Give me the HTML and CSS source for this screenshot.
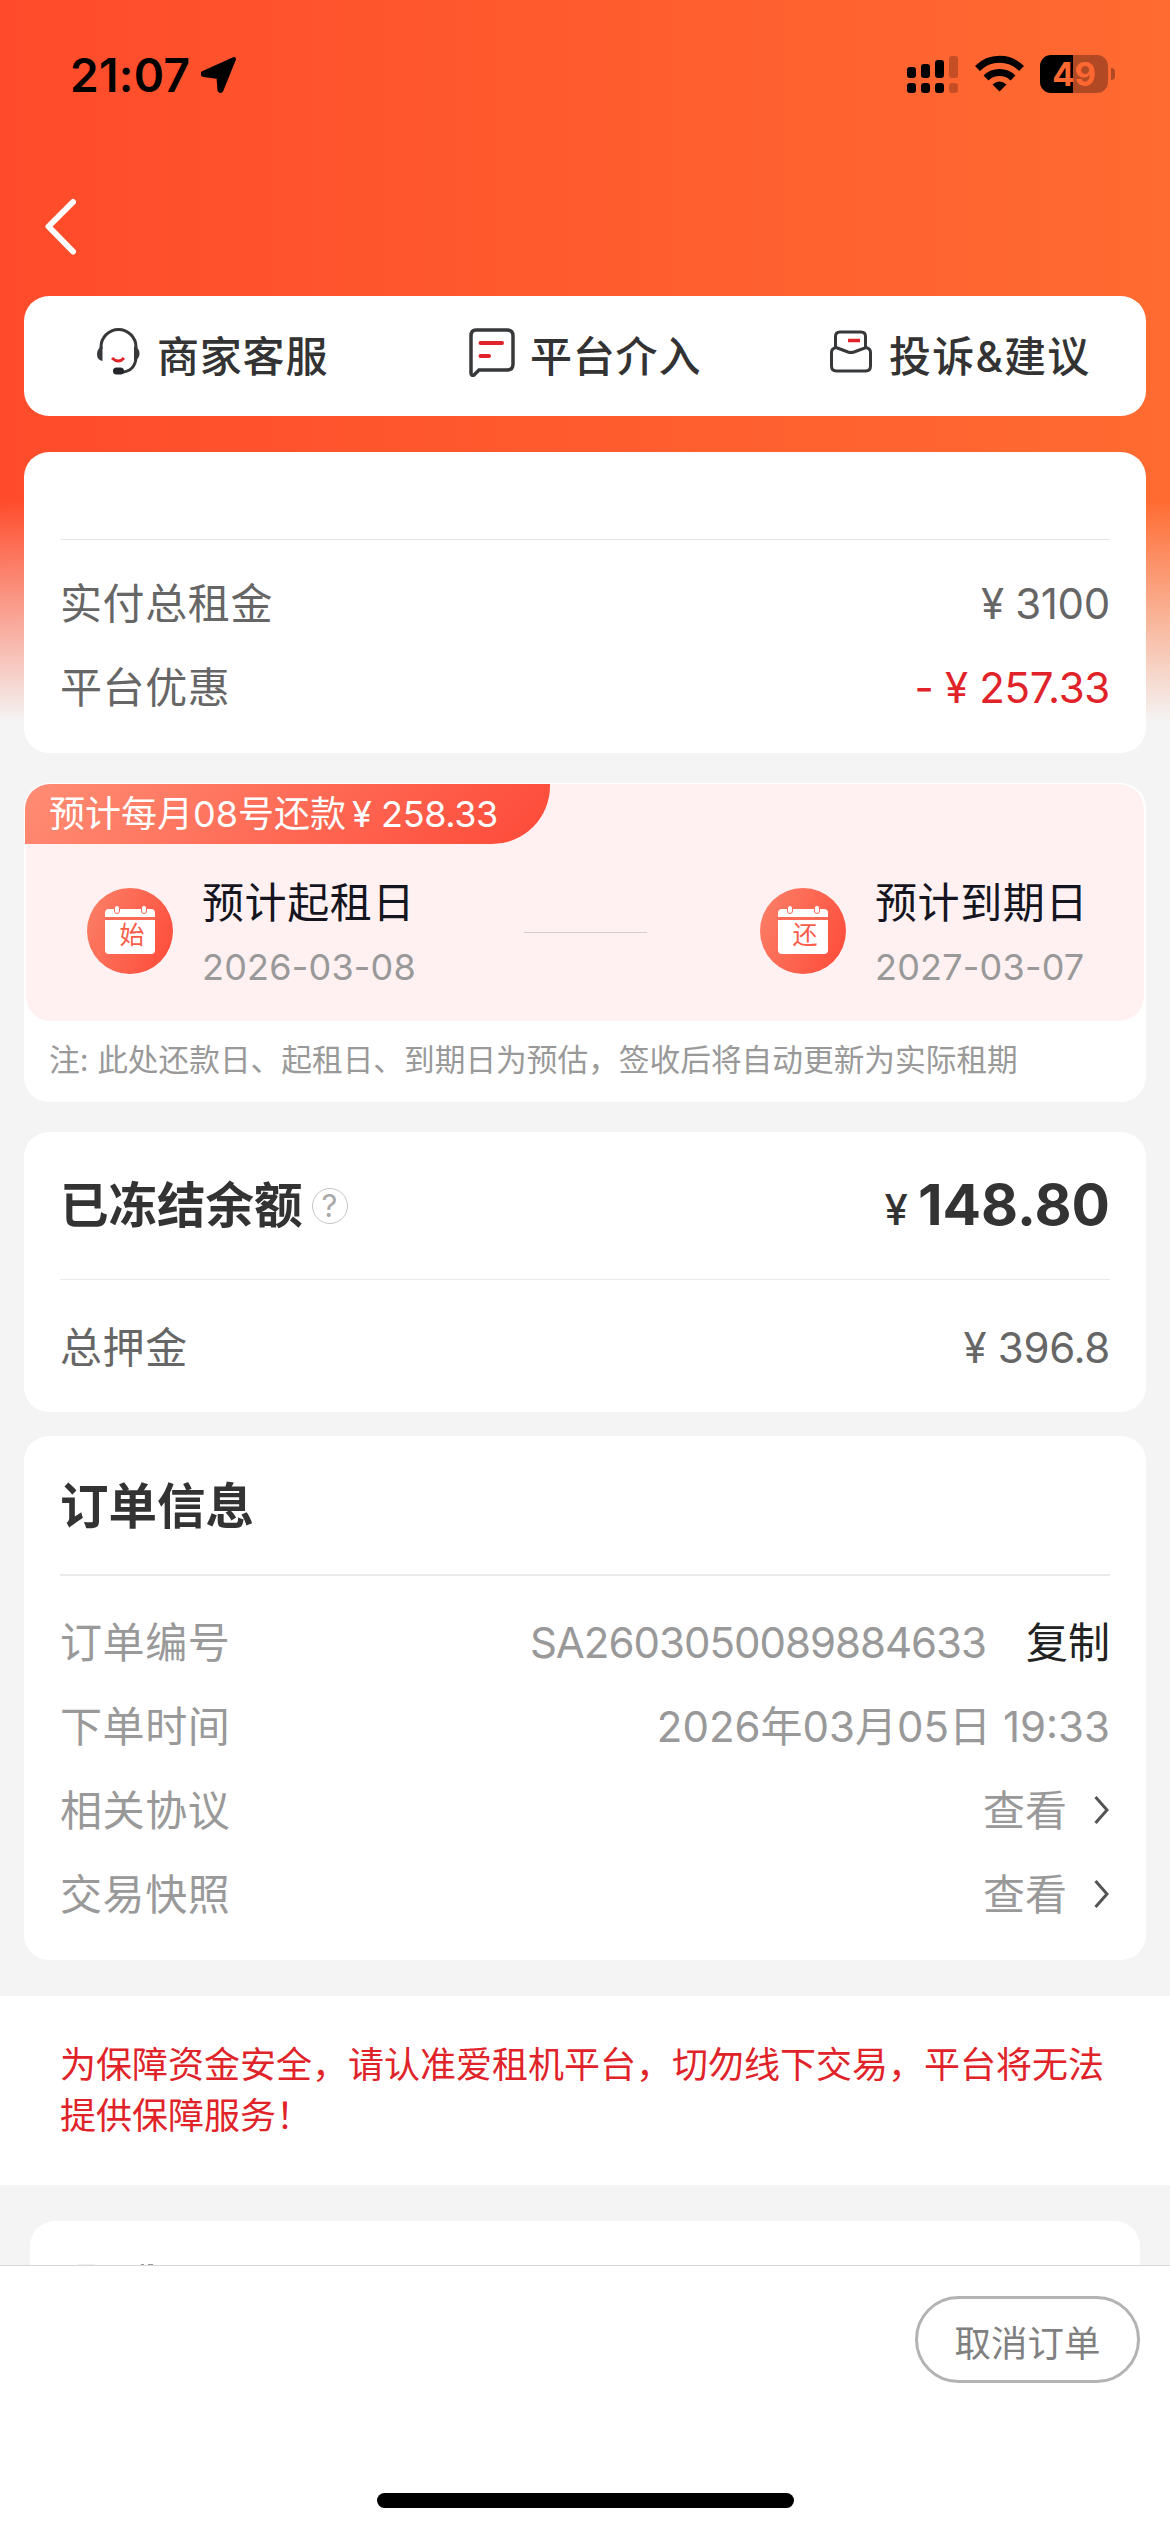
FILE: index.html
```html
<!DOCTYPE html>
<html lang="zh-CN">
<head>
<meta charset="utf-8">
<title>订单详情</title>
<link rel="stylesheet" href="styles.css">
</head>
<body>
<div class="page">
  <div class="status-bar">
    <div class="status-left">
      <span class="time">21:07</span>
      <svg class="location" width="36" height="38" viewBox="0 0 36 38"><path d="M33 3 20.500 34Q19.500 36 18.500 34L17.500 21 3 19Q0 18 3 16.500Z" fill="#000" stroke="#000" stroke-width="4" stroke-linejoin="round"/></svg>
    </div>
    <div class="status-right">
      <svg width="52" height="42" viewBox="0 0 52 42">
        <rect x="0" y="13" width="9" height="11" rx="3"/><rect x="14" y="10" width="9" height="14" rx="3"/><rect x="28" y="6" width="9" height="18" rx="3"/>
        <rect x="0" y="29" width="9" height="10" rx="3"/><rect x="14" y="29" width="9" height="10" rx="3"/><rect x="28" y="29" width="9" height="10" rx="3"/>
        <g opacity=".22"><rect x="42" y="2" width="9" height="22" rx="3"/><rect x="42" y="29" width="9" height="10" rx="3"/></g>
      </svg>
      <svg class="wifi" width="49" height="38" viewBox="0 0 49 38">
        <g fill="none" stroke="#000" stroke-width="7"><path d="M2.500 13.500a31 31 0 0 1 44 0"/><path d="M11 23a19.500 19.500 0 0 1 27 0"/></g>
        <path d="M24.500 36.500 17.500 29.500Q24.500 23.500 31.500 29.500Z"/>
      </svg>
      <div class="battery"><span>49</span></div>
      <i class="battery-cap"></i>
    </div>
  </div>
  <div class="nav-bar">
    <svg width="34" height="60" viewBox="0 0 34 60"><path d="M29 5.500 4.500 30 29 55" transform="translate(0 -.5)" fill="none" stroke="#fff" stroke-width="6" stroke-linecap="round" stroke-linejoin="round"/></svg>
  </div>

  <div class="card actions">
    <div class="action">
      <svg width="46" height="50" viewBox="0 0 46 50" fill="none">
        <path d="M5 21V19a17 17 0 0 1 35 0v11q-1 13-15 14.500" stroke="#36383a" stroke-width="3"/>
        <path d="M6.500 18.500Q1 20 1 26t5.500 7Z" fill="#36383a"/><path d="M38 18.500Q43.500 20 43.500 25.500T38 33Z" fill="#36383a"/>
        <rect x="17" y="39.500" width="11" height="7" rx="3.500" fill="#22252a"/>
        <path d="M16 30q6.500 6 12 0" stroke="#e02329" stroke-width="3"/>
      </svg>
      <span>商家客服</span>
    </div>
    <div class="action">
      <svg width="46" height="50" viewBox="0 0 46 50" fill="none">
        <path d="M7 2H38q6 0 6 6V36q0 6-6 6H10l-5 5q-3 1-3-2V8q0-6 5-6Z" stroke="#36383a" stroke-width="3.500"/>
        <path d="M11.500 15H33M11.500 28H20" stroke="#e02329" stroke-width="4" stroke-linecap="round"/>
      </svg>
      <span>平台介入</span>
    </div>
    <div class="action">
      <svg width="42" height="50" viewBox="0 0 42 50" fill="none" stroke="#36383a" stroke-width="3">
        <path d="M5.500 20V8.500q0-4.500 4.500-4.500H31q4.500 0 4.500 4.500V20"/>
        <path d="M6 19.500 18 24q3 1 6 0l12-4.500q4.500 1 4.500 5V38q0 5-5 5h-29q-5 0-5-5V24.500q0-4 4.500-5Z"/>
        <path d="M18 12.500H30" stroke="#e02329" stroke-width="3.500"/>
      </svg>
      <span>投诉&amp;建议</span>
    </div>
  </div>

  <div class="card rent">
    <div class="rent-head"></div>
    <div class="row dark"><span>实付总租金</span><span class="num price">¥ 3100</span></div>
    <div class="row dark"><span>平台优惠</span><span class="num price red">- ¥ 257.33</span></div>
  </div>

  <div class="card plan">
    <div class="period">
      <div class="tag">预计每月08号还款<span class="tag-price">¥ 258.33</span></div>
      <div class="dates">
        <div class="day">
          <div class="badge"><div class="calendar"><i class="ring"></i><i class="ring"></i><span>始</span></div></div>
          <div class="day-text"><div class="day-title">预计起租日</div><div class="day-value">2026-03-08</div></div>
        </div>
        <div class="link-line"></div>
        <div class="day">
          <div class="badge"><div class="calendar"><i class="ring"></i><i class="ring"></i><span>还</span></div></div>
          <div class="day-text"><div class="day-title">预计到期日</div><div class="day-value">2027-03-07</div></div>
        </div>
      </div>
    </div>
    <div class="note">注: 此处还款日、起租日、到期日为预估，签收后将自动更新为实际租期</div>
  </div>

  <div class="card balance">
    <div class="balance-head">
      <span class="title">已冻结余额</span>
      <span class="help">?</span>
      <span class="amount"><small>¥</small>148.80</span>
    </div>
    <div class="row dark"><span>总押金</span><span class="num price">¥ 396.8</span></div>
  </div>

  <div class="card order">
    <div class="order-head title">订单信息</div>
    <div class="row"><span>订单编号</span><span class="num order-no">SA2603050089884633</span><span class="copy">复制</span></div>
    <div class="row"><span>下单时间</span><span class="num order-time">2026年03月05日 19:33</span></div>
    <div class="row"><span>相关协议</span><span class="num">查看</span><svg class="arrow" width="16" height="30" viewBox="0 0 16 30"><path d="M1.500 2 13 15 1.500 28" fill="none" stroke="#555" stroke-width="3"/></svg></div>
    <div class="row"><span>交易快照</span><span class="num">查看</span><svg class="arrow" width="16" height="30" viewBox="0 0 16 30"><path d="M1.500 2 13 15 1.500 28" fill="none" stroke="#555" stroke-width="3"/></svg></div>
  </div>

  <div class="notice">为保障资金安全，请认准爱租机平台，切勿线下交易，平台将无法提供保障服务！</div>

  <div class="next-card"><i></i><i></i><i></i></div>

  <div class="footer">
    <div class="cancel">取消订单</div>
    <div class="home"></div>
  </div>
</div>
</body>
</html>
```
FILE: styles.css
```css
* { box-sizing: border-box; }
body {
  margin: 0;
  background: #f4f4f4;
  font-family: Inter, "Noto Sans CJK SC", sans-serif;
  color: #333;
}
.page {
  width: 1170px;
  height: 2532px;
  overflow: hidden;
  display: flex;
  flex-direction: column;
  background:
    linear-gradient(180deg, rgba(244,244,244,0) 500px, #f4f4f4 722px),
    linear-gradient(90deg, #ff4b2b, #ff6b31);
}
.page > * { flex: none; }
svg { display: block; flex: none; }

.status-bar {
  height: 150px;
  display: flex;
  justify-content: space-between;
  padding: 54px 55px 0 70px;
}
.status-left, .status-right { display: flex; align-items: flex-start; }
.time {
  width: 131px;
  font-size: 46px;
  font-weight: 600;
  line-height: 42px;
  letter-spacing: 0.3px;
  color: #000;
  white-space: nowrap;
}
.location { margin-top: 2px; }
.wifi { margin: 1px 16px 0 16px; }
.battery {
  width: 68px;
  height: 38px;
  margin-top: 1px;
  border-radius: 11px;
  background: linear-gradient(90deg, #000 33px, #b14a24 33px);
  color: #ff6830;
  font-size: 33px;
  font-weight: 700;
  line-height: 39px;
  text-align: center;
}
.battery-cap {
  width: 4px;
  height: 12px;
  margin: 14px 0 0 3px;
  border-radius: 0 5px 5px 0;
  background: #b14a24;
}
.nav-bar { height: 146px; padding: 47px 0 0 44px; }

.card {
  margin: 0 24px;
  background: #fff;
  border-radius: 25px;
  overflow: hidden;
}
.actions {
  height: 120px;
  margin-bottom: 36px;
  display: grid;
  grid-template-columns: 373px 361px auto;
  padding: 0 0 0 72px;
  align-items: center;
}
.action {
  display: flex;
  gap: 15px;
  align-items: center;
  font-size: 42px;
  font-weight: 500;
  line-height: 50px;
  letter-spacing: 0.8px;
  white-space: nowrap;
}
.action svg { margin-top: -6px; }
.action span { padding-top: 1px; }
.action:last-child { gap: 17px; letter-spacing: 1.2px; }

.rent { height: 301px; margin-bottom: 30px; padding: 0 36px; }
.rent-head { height: 88px; margin-bottom: 21px; border-bottom: 1px solid #e6e6e6; }
.row {
  height: 84px;
  display: flex;
  align-items: center;
  font-size: 42px;
  line-height: 85px;
  color: #999;
  white-space: nowrap;
}
.row.dark { color: #666; }
.row > span:first-child { letter-spacing: 0.6px; }
.num { margin-left: auto; }
.row .price { letter-spacing: -0.3px; }
.row .red { color: #e02329; }
.order-no { letter-spacing: -1px; }

.plan { height: 319px; margin-bottom: 30px; padding: 2px 2px 0; background: #fff; }
.period {
  height: 237px;
  border-radius: 25px;
  background: #fff1f1;
}
.tag {
  width: 525px;
  height: 60px;
  margin: -1px 0 0 -1px;
  padding-left: 24px;
  border-radius: 25px 0 58px 0;
  background: linear-gradient(135deg, #ff8d74, #fe4938);
  font-size: 36px;
  line-height: 60px;
  color: #fff;
  white-space: nowrap;
}
.tag-price { margin-left: 6px; letter-spacing: -0.4px; }
.dates { display: flex; align-items: center; padding: 15px 0 0 61px; }
.day { display: flex; align-items: center; width: 437px; }
.day:last-child { width: auto; }
.badge {
  width: 86px;
  height: 86px;
  margin: 13px 29px 0 0;
  padding: 21px 0 0 18px;
  border-radius: 50%;
  background: linear-gradient(115deg, #fb8269, #fe4938);
}
.calendar {
  position: relative;
  width: 50px;
  height: 45px;
  padding-top: 10px;
  border-radius: 4px;
  background: linear-gradient(#fff 8px, #fb6b58 8px, #fb6b58 11px, #fff 11px);
  color: #fb5d4a;
  font-size: 25px;
  line-height: 33px;
  text-align: center;
}
.calendar span { display: block; padding-left: 4px; }
.ring {
  position: absolute;
  left: 9px;
  top: -4px;
  width: 6px;
  height: 9px;
  border: 1px solid #fb6b58;
  border-radius: 3px;
  background: #fff;
}
.ring + .ring { left: 36px; }
.day-text { height: 130px; padding-top: 11px; white-space: nowrap; }
.day-title { height: 65px; font-size: 42px; line-height: 65px; letter-spacing: 0.6px; color: #15151f; }
.day-value { height: 64px; font-size: 36px; line-height: 64px; letter-spacing: 0.2px; color: #999; }
.link-line { width: 123px; height: 1px; margin: 16px 113px 0 0; background: #d5cccc; }
.note {
  padding-left: 23px;
  font-size: 30.700px;
  line-height: 78px;
  color: #999;
  white-space: nowrap;
}

.balance { height: 280px; margin-bottom: 24px; padding: 0 36px; }
.title { font-size: 48.500px; font-weight: 600; }
.balance-head {
  height: 148px;
  margin-bottom: 25px;
  display: flex;
  align-items: center;
  border-bottom: 1px solid #eaeaea;
  line-height: 149px;
}
.help {
  width: 36px;
  height: 36px;
  margin: 0 0 0 9px;
  border: 1.500px solid #c4c4c4;
  border-radius: 50%;
  font-size: 31px;
  line-height: 33px;
  text-align: center;
  color: #aaa;
}
.amount { margin: 3px 0 0 auto; font-size: 57px; font-weight: 700; }
.amount small { margin-right: 10px; font-size: 42px; font-weight: 500; }

.order { height: 524px; margin-bottom: 36px; padding: 0 36px; }
.order-head { height: 140px; margin-bottom: 24px; line-height: 141px; border-bottom: 2px solid #eaeaea; }
.copy { margin-left: 40px; color: #222; }
.arrow { margin-left: 27px; }

.notice {
  height: 189px;
  padding: 44px 60px 0;
  background: #fff;
  font-size: 36px;
  line-height: 51px;
  color: #e02329;
}
.next-card {
  height: 44px;
  margin: 36px 30px 0;
  display: flex;
  align-items: flex-end;
  border-radius: 25px 25px 0 0;
  background: #fff;
}
.next-card i { height: 1px; }
.next-card i:nth-child(1) { width: 17px; margin-left: 48px; background: #eee; }
.next-card i:nth-child(2) { width: 3px; margin-left: 46px; background: #999; }
.next-card i:nth-child(3) { width: 5px; margin-left: 4px; background: #999; }
.footer {
  height: 267px;
  display: flex;
  flex-direction: column;
  border-top: 1px solid #d8d8d8;
  background: #fff;
}
.cancel {
  width: 225px;
  height: 87px;
  margin: 30px 30px 0 auto;
  border: 3px solid #b3b3b3;
  border-radius: 44px;
  font-size: 36.500px;
  line-height: 90px;
  text-align: center;
  color: #808080;
}
.home { width: 417px; height: 15px; margin: 110px auto 0; border-radius: 8px; background: #000; }
```
